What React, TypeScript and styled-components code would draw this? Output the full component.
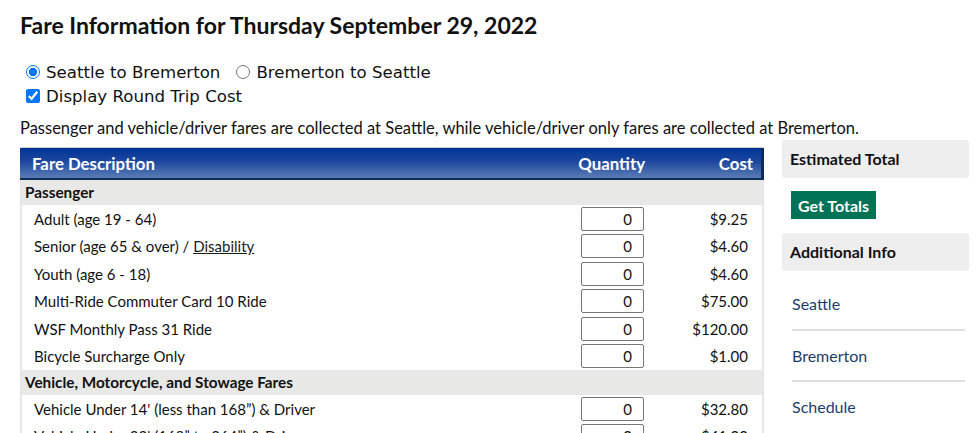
import React, { useState } from "react";
import styled, { createGlobalStyle } from "styled-components";

const GlobalStyle = createGlobalStyle`
  body {
    margin: 0;
    background: #ffffff;
    font-family: Lato, "Liberation Sans", sans-serif;
    color: #1a1a1a;
  }
`;

const Page = styled.div`
  padding: 10px 8px 0 20px;
  height: 433px;
  overflow: hidden;
  box-sizing: border-box;
`;

const Title = styled.h1`
  margin: 0 0 20px;
  font-size: 23px;
  font-weight: 700;
  line-height: 30px;
  color: #111;
`;

const Options = styled.div`
  font-family: "DejaVu Sans", Verdana, sans-serif;
  font-size: 16.6px;
  color: #111;
  padding-left: 4px;
`;

const OptionRow = styled.div`
  display: flex;
  align-items: center;
  height: 24px;
`;

const Choice = styled.label`
  display: inline-flex;
  align-items: center;
  margin-right: 14px;

  input {
    margin: 0 6px 0 2px;
    width: 14px;
    height: 14px;
  }
`;

const Note = styled.p`
  margin: 10px 0 9px;
  font-size: 16.5px;
  line-height: 20px;
  color: #111;
`;

const Layout = styled.div`
  display: flex;
  gap: 18px;
  align-items: flex-start;
`;

const FareTable = styled.div`
  width: 744px;
  border-top: 1px solid #cfcfcf;
  border-left: 2px solid #e6e6e6;
  border-right: 2px solid #e6e6e6;
  box-sizing: border-box;
`;

const Row = styled.div`
  display: grid;
  grid-template-columns: 1fr 88px 114px;
  align-items: center;
`;

const HeaderRow = styled(Row)`
  height: 30px;
  margin: 0 -2px;
  background: linear-gradient(180deg, #003497 0%, #1d479f 45%, #5b7db5 100%);
  border-bottom: 2px solid #0d2c5c;
  border-right: 3px solid #0d2c5c;
  color: #ffffff;
  font-weight: 700;
  font-size: 16.8px;
`;

const HeadCell = styled.div<{ $align?: string; $pad?: number }>`
  text-align: ${(p) => p.$align || "left"};
  padding: ${(p) => (p.$align === "right" ? `0 ${p.$pad ?? 0}px 0 0` : "0 0 0 12px")};
`;

const Category = styled.div`
  height: 25px;
  line-height: 25px;
  background: #e8e8e6;
  font-weight: 700;
  font-size: 15.3px;
  padding-left: 3px;
  color: #111;
`;

const ItemRow = styled(Row)`
  height: 27.5px;
  font-size: 15px;
  color: #111;
`;

const Desc = styled.div`
  padding-left: 12px;

  a {
    color: #1a1a1a;
    text-decoration: underline;
  }
`;

const QtyCell = styled.div`
  display: flex;
  justify-content: flex-end;
  padding-right: 4px;
`;

const QtyInput = styled.input`
  width: 63px;
  height: 24px;
  box-sizing: border-box;
  border: 1px solid #767676;
  border-radius: 2px;
  text-align: right;
  padding: 0 11px 0 0;
  font-family: Lato, sans-serif;
  font-size: 15px;
  color: #111;
`;

const Cost = styled.div`
  text-align: right;
  padding-right: 14px;
`;

const Sidebar = styled.div`
  width: 187px;
  display: flex;
  flex-direction: column;
  margin-top: -7px;
`;

const Panel = styled.div`
  background: #eeeeee;
  border-radius: 3px;
  height: 38px;
  line-height: 38px;
  padding-left: 8px;
  font-weight: 700;
  font-size: 16px;
  color: #111;
`;

const TotalsButton = styled.button`
  align-self: flex-start;
  margin: 13px 0 14px 9px;
  height: 28px;
  padding: 0 7px;
  border: none;
  background: #007356;
  color: #ffffff;
  font-family: Lato, sans-serif;
  font-weight: 700;
  font-size: 16px;
  cursor: pointer;
`;

const LinkList = styled.div`
  padding: 8px 4px 0 10px;
`;

const SideLink = styled.a<{ $last?: boolean }>`
  display: block;
  height: 49.5px;
  line-height: 49px;
  border-bottom: ${(p) => (p.$last ? "none" : "2px solid #dedede")};
  color: #1c3d6e;
  font-size: 16px;
  text-decoration: none;
`;

type Fare = { label: React.ReactNode; cost: string };

const passengerFares: Fare[] = [
  { label: "Adult (age 19 - 64)", cost: "$9.25" },
  {
    label: (
      <>
        Senior (age 65 &amp; over) / <a href="#">Disability</a>
      </>
    ),
    cost: "$4.60",
  },
  { label: "Youth (age 6 - 18)", cost: "$4.60" },
  { label: "Multi-Ride Commuter Card 10 Ride", cost: "$75.00" },
  { label: "WSF Monthly Pass 31 Ride", cost: "$120.00" },
  { label: "Bicycle Surcharge Only", cost: "$1.00" },
];

const vehicleFares: Fare[] = [
  { label: "Vehicle Under 14' (less than 168\u201D) & Driver", cost: "$32.80" },
  { label: "Vehicle Under 22' (168\u201D to 264\u201D) & Driver", cost: "$41.00" },
];

const FareRows: React.FC<{ fares: Fare[] }> = ({ fares }) => (
  <>
    {fares.map((f, i) => (
      <ItemRow key={i}>
        <Desc>{f.label}</Desc>
        <QtyCell>
          <QtyInput defaultValue="0" />
        </QtyCell>
        <Cost>{f.cost}</Cost>
      </ItemRow>
    ))}
  </>
);

export default function App() {
  const [direction, setDirection] = useState("sea");
  const [roundTrip, setRoundTrip] = useState(true);

  return (
    <Page>
      <GlobalStyle />
      <Title>Fare Information for Thursday September 29, 2022</Title>
      <Options>
        <OptionRow>
          <Choice>
            <input
              type="radio"
              checked={direction === "sea"}
              onChange={() => setDirection("sea")}
            />
            Seattle to Bremerton
          </Choice>
          <Choice>
            <input
              type="radio"
              checked={direction === "brem"}
              onChange={() => setDirection("brem")}
            />
            Bremerton to Seattle
          </Choice>
        </OptionRow>
        <OptionRow>
          <Choice>
            <input
              type="checkbox"
              checked={roundTrip}
              onChange={() => setRoundTrip(!roundTrip)}
            />
            Display Round Trip Cost
          </Choice>
        </OptionRow>
      </Options>
      <Note>
        Passenger and vehicle/driver fares are collected at Seattle, while
        vehicle/driver only fares are collected at Bremerton.
      </Note>
      <Layout>
        <FareTable>
          <HeaderRow>
            <HeadCell>Fare Description</HeadCell>
            <HeadCell $align="right" $pad={2}>Quantity</HeadCell>
            <HeadCell $align="right" $pad={8}>Cost</HeadCell>
          </HeaderRow>
          <Category>Passenger</Category>
          <FareRows fares={passengerFares} />
          <Category>Vehicle, Motorcycle, and Stowage Fares</Category>
          <FareRows fares={vehicleFares} />
        </FareTable>
        <Sidebar>
          <Panel>Estimated Total</Panel>
          <TotalsButton>Get Totals</TotalsButton>
          <Panel>Additional Info</Panel>
          <LinkList>
            <SideLink href="#">Seattle</SideLink>
            <SideLink href="#">Bremerton</SideLink>
            <SideLink href="#" $last>Schedule</SideLink>
          </LinkList>
        </Sidebar>
      </Layout>
    </Page>
  );
}
